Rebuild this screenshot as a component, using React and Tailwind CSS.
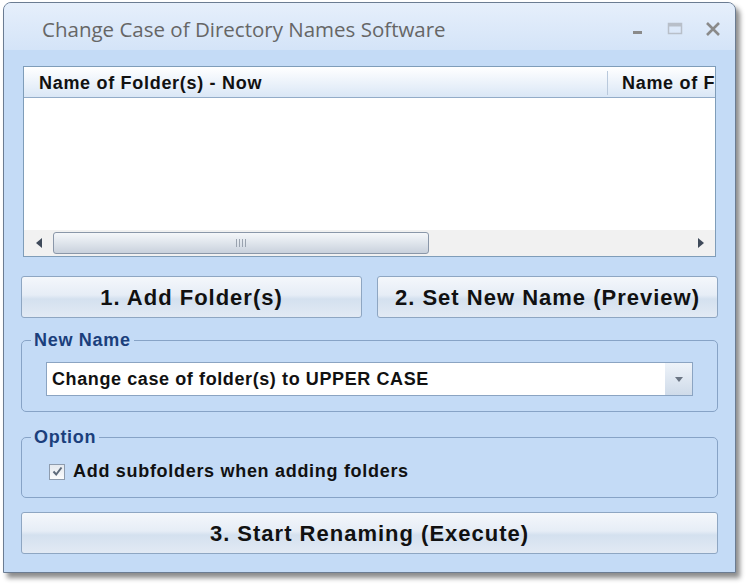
import React, { useState } from 'react';

const btnBg =
  'bg-[linear-gradient(to_bottom,#f4f7fb_0%,#e6edf6_45%,#d4e1ef_55%,#e2eaf4_100%)]';

const WinButton = ({ children, className = '' }) => (
  <button
    className={`h-[42px] rounded-[3px] border border-[#8ea6c2] ${btnBg} text-[22px] font-bold text-[#111] tracking-[1px] ${className}`}
  >
    {children}
  </button>
);

const GroupBox = ({ title, children, className = '' }) => (
  <fieldset className={`rounded-[5px] border border-[#87a3c6] px-[24px] ${className}`}>
    <legend className="ml-[-15px] px-[3px] text-[18px] leading-[20px] font-bold tracking-[0.7px] text-[#1b3f7c]">
      {title}
    </legend>
    {children}
  </fieldset>
);

const App = () => {
  const [subfolders, setSubfolders] = useState(true);

  return (
    <div className="h-[586px] w-[750px] bg-white pl-[3px] pt-[2px] font-['Liberation_Sans',Arial,sans-serif]">
      <div className="flex h-[571px] w-[733px] flex-col overflow-hidden rounded-t-[8px] border border-[#6b7c92] bg-[#c4dbf6] shadow-[4px_5px_5px_rgba(0,0,0,0.45)]">
        {/* title bar */}
        <div className="flex h-[47px] shrink-0 items-center bg-[linear-gradient(to_bottom,#e6effb,#d4e4f8)] pl-[38px] pr-[14px]">
          <span className="flex-1 pt-[6px] font-['Open_Sans',sans-serif] text-[20.5px] text-[#666]">
            Change Case of Directory Names Software
          </span>
          <div className="flex items-center gap-[22px] pt-[4px]">
            <svg width="14" height="14" viewBox="0 0 14 14">
              <rect x="2" y="9" width="9" height="3" fill="#8a8a8a" />
            </svg>
            <svg width="16" height="14" viewBox="0 0 16 14">
              <rect x="1.5" y="1.5" width="13" height="10" fill="none" stroke="#b8bfc9" strokeWidth="1.5" />
              <rect x="1.5" y="1.5" width="13" height="3" fill="#b8bfc9" />
            </svg>
            <svg width="16" height="16" viewBox="0 0 16 16">
              <path d="M2 2 L14 14 M14 2 L2 14" stroke="#8a8a8a" strokeWidth="2.6" />
            </svg>
          </div>
        </div>

        {/* body */}
        <div className="flex flex-1 flex-col px-[17px] pt-[16px]">
          {/* list view */}
          <div className="mx-[2px] flex h-[191px] flex-col border border-[#7f9db9] bg-white">
            <div className="flex h-[31px] shrink-0 items-center border-b border-[#93acc8] bg-[linear-gradient(to_bottom,#ffffff,#dae7f6)] pt-[2px] text-[18px] font-bold tracking-[0.7px] text-[#111]">
              <div className="w-[583px] shrink-0 pl-[15px]">Name of Folder(s) - Now</div>
              <div className="h-[24px] w-px bg-[#b9c9dc]" />
              <div className="overflow-hidden whitespace-nowrap pl-[14px]">Name of F</div>
            </div>
            <div className="flex-1" />
            {/* horizontal scrollbar */}
            <div className="flex h-[26px] items-center bg-[#f1f1f1]">
              <div className="flex w-[29px] justify-center">
                <svg width="6" height="10" viewBox="0 0 6 10">
                  <path d="M6 0 L0 5 L6 10 Z" fill="#3f4a5a" />
                </svg>
              </div>
              <div className="flex h-[22px] w-[376px] items-center justify-center rounded-[3px] border border-[#8a97a9] bg-[linear-gradient(to_bottom,#f5f7fa,#dfe5ec_50%,#c9d1dc)]">
                <div className="flex gap-[2px]">
                  <span className="h-[8px] w-px bg-[#9aa3af]" />
                  <span className="h-[8px] w-px bg-[#9aa3af]" />
                  <span className="h-[8px] w-px bg-[#9aa3af]" />
                  <span className="h-[8px] w-px bg-[#9aa3af]" />
                </div>
              </div>
              <div className="flex-1" />
              <div className="flex w-[29px] justify-center">
                <svg width="6" height="10" viewBox="0 0 6 10">
                  <path d="M0 0 L6 5 L0 10 Z" fill="#3f4a5a" />
                </svg>
              </div>
            </div>
          </div>

          {/* action buttons */}
          <div className="mt-[19px] flex gap-[15px]">
            <WinButton className="w-[341px]">1. Add Folder(s)</WinButton>
            <WinButton className="flex-1">2. Set New Name (Preview)</WinButton>
          </div>

          <GroupBox title="New Name" className="mt-[12px] pb-[15px]">
            <div className="mt-[12px] flex h-[34px] border border-[#8ba4c2] bg-white">
              <div className="flex flex-1 items-center pl-[5px] text-[18px] font-bold tracking-[0.6px] text-[#111]">
                Change case of folder(s) to UPPER CASE
              </div>
              <div className="flex w-[27px] items-center justify-center bg-[linear-gradient(to_bottom,#eef3f9,#cfdbe9)]">
                <svg width="8" height="5" viewBox="0 0 8 5">
                  <path d="M0 0 L8 0 L4 5 Z" fill="#6b7583" />
                </svg>
              </div>
            </div>
          </GroupBox>

          <GroupBox title="Option" className="mt-[15px] pb-[12px]">
            <label className="mt-[11px] ml-[3px] flex cursor-default items-center gap-[8px] text-[18px] font-bold tracking-[0.7px] text-[#111]">
              <span
                onClick={() => setSubfolders(!subfolders)}
                className="flex h-[16px] w-[16px] items-center justify-center border border-[#8e9cae] bg-[linear-gradient(to_bottom,#e4e9ef,#fbfcfd)]"
              >
                {subfolders && (
                  <svg width="11" height="11" viewBox="0 0 11 11">
                    <path d="M1.5 5.5 L4.2 8.5 L9.5 1.5" fill="none" stroke="#5d6a7a" strokeWidth="2" />
                  </svg>
                )}
              </span>
              Add subfolders when adding folders
            </label>
          </GroupBox>

          <WinButton className="mt-[14px] w-full">3. Start Renaming (Execute)</WinButton>
        </div>
      </div>
    </div>
  );
};

export default App;
